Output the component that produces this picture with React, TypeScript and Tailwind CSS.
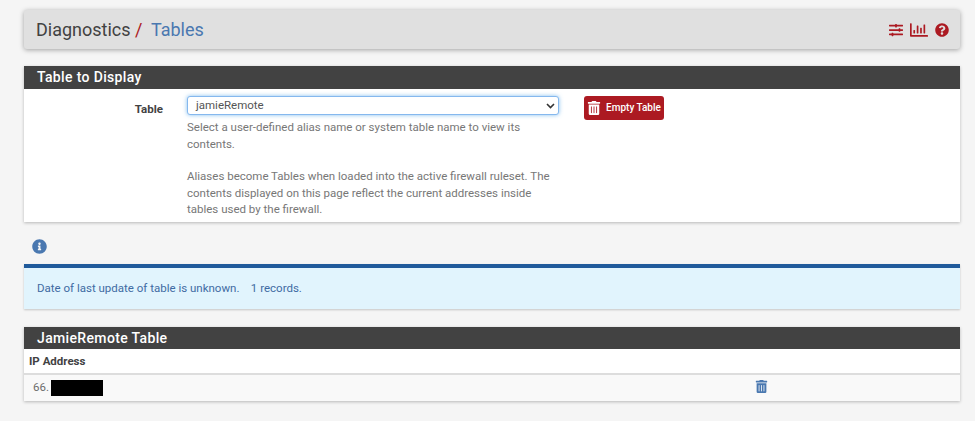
import React from "react";
import { FaSlidersH, FaRegChartBar, FaQuestionCircle, FaTrashAlt, FaInfoCircle } from "react-icons/fa";

const App = () => {
  return (
    <div className="h-[421px] w-[975px] overflow-hidden bg-[#f5f5f5] pl-6 pr-[15px] pt-2.5 font-['Roboto',sans-serif] text-[11.5px] text-[#6d6d6d]">
      {/* breadcrumb bar */}
      <div className="flex h-[39px] items-center justify-between rounded-[3px] bg-[#e0e0e0] pl-3 pr-[11px] shadow-[0_1px_5px_rgba(0,0,0,0.35)]">
        <h1 className="text-[18px] text-[#424242]">
          Diagnostics<span className="text-[#ac1a22]"> / </span>
          <span className="ml-1 text-[#4a78b0]">Tables</span>
        </h1>
        <div className="flex items-center gap-[7px] text-[#ac1a22]">
          <FaSlidersH size={14} />
          <FaRegChartBar size={18} />
          <FaQuestionCircle size={14} />
        </div>
      </div>

      {/* table picker */}
      <div className="mt-[17px] bg-white shadow-[0_1px_3px_rgba(0,0,0,0.25)]">
        <div className="flex h-[23px] items-center bg-[#424242] pl-[13px] text-[14px] font-medium tracking-[0.35px] text-white">
          Table to Display
        </div>
        <div className="flex h-[133px] pt-[7px]">
          <label className="mt-[5px] w-[139px] text-right font-bold text-[#424242]">Table</label>
          <div className="ml-6 w-[372px]">
            <div className="flex h-[19px] items-center justify-between rounded-[3px] border border-[#85b8ee] bg-white pl-2 pr-[3px] text-[#555] shadow-[0_0_4px_rgba(102,175,233,0.8)]">
              <span>jamieRemote</span>
              <svg width="9" height="6" viewBox="0 0 9 6" fill="none" stroke="#333" strokeWidth="1.6">
                <path d="M1 1l3.5 3.5L8 1" />
              </svg>
            </div>
            <p className="mt-1 w-[365px] leading-[16.5px] text-[#777]">
              Select a user-defined alias name or system table name to view its contents.
            </p>
            <p className="mt-[16px] w-[365px] leading-[16.5px] text-[#777]">
              Aliases become Tables when loaded into the active firewall ruleset. The contents displayed on this page reflect the current addresses inside tables used by the firewall.
            </p>
          </div>
          <button className="ml-[25px] flex h-6 w-[80px] items-center justify-center gap-[5px] rounded-[3px] bg-[#ac1a22] pb-[1px] text-[10px] font-medium text-white">
            <FaTrashAlt size={14} />
            Empty Table
          </button>
        </div>
      </div>

      {/* info icon */}
      <div className="flex h-[42px] items-center pl-2 pt-[6px] text-[#4a78b0]">
        <FaInfoCircle size={15} />
      </div>

      <div className="flex h-[45px] items-center border-t-[4px] border-[#1f5a9b] bg-[#e1f4fd] pl-[13px] text-[#3f6ba3] shadow-[0_1px_2px_rgba(0,0,0,0.2)]">
        <span className="whitespace-pre">Date of last update of table is unknown.    1 records.</span>
      </div>

      {/* table contents */}
      <div className="mt-[18px] bg-white shadow-[0_1px_3px_rgba(0,0,0,0.25)]">
        <div className="flex h-[22px] items-center bg-[#424242] pl-[13px] text-[14px] font-medium tracking-[0.35px] text-white">
          JamieRemote Table
        </div>
        <div className="flex h-[26px] items-center border-b-2 border-[#ddd] pl-[5px] pt-[2px] font-bold text-[#424242]">IP Address</div>
        <div className="flex h-[26px] items-center bg-[#f9f9f9] pl-[9px]">
          <span className="w-[18px]">66.</span>
          <span className="h-4 w-[52px] bg-black" />
          <FaTrashAlt size={13} className="mb-[4px] ml-[652px] text-[#4a78b0]" />
        </div>
      </div>
    </div>
  );
};

export default App;
